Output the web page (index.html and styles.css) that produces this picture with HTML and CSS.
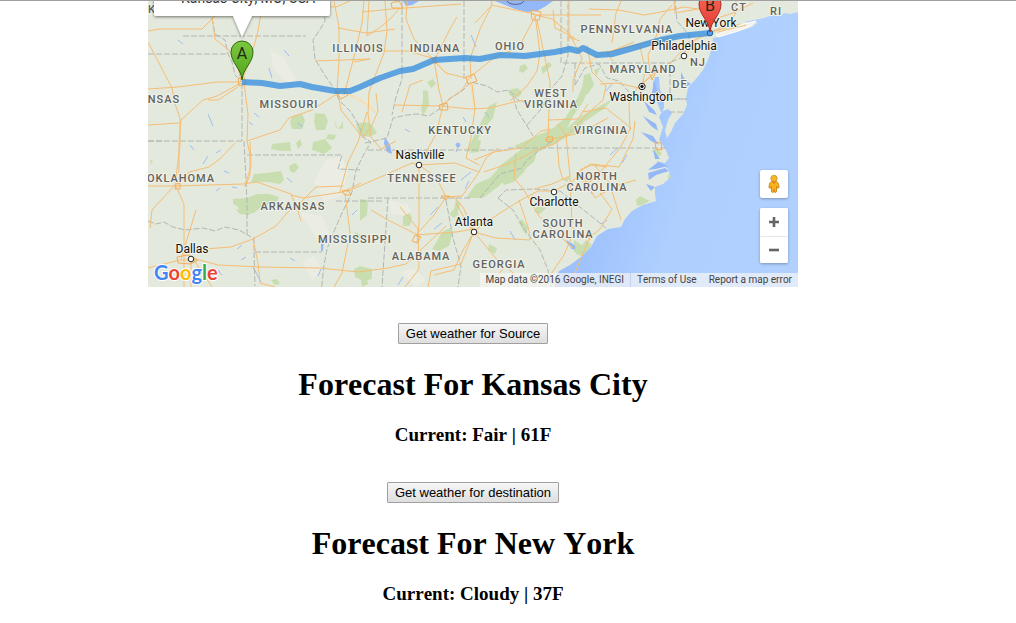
FILE: index.html
```html
<!DOCTYPE html>
<html lang="en">
<head>
<meta charset="utf-8">
<meta name="viewport" content="width=device-width, initial-scale=1">
<title>Trip weather</title>
<link rel="stylesheet" href="styles.css">
</head>
<body>
<main class="page">
  <section class="map" aria-label="Route map">
    <svg class="map-canvas" viewBox="148 1 650 286" role="img" aria-label="Route from Kansas City to New York">
      <defs>
        <linearGradient id="sea" x1="0" y1="0" x2="1" y2="0.35">
          <stop offset="0" stop-color="#8fb3fa"/><stop offset="0.45" stop-color="#a2c5fd"/><stop offset="0.7" stop-color="#afd0ff"/><stop offset="1" stop-color="#b0d1ff"/>
        </linearGradient>
        <linearGradient id="pin-green" x1="0" y1="0" x2="0" y2="1"><stop offset="0" stop-color="#7cc83f"/><stop offset="1" stop-color="#4fa51c"/></linearGradient>
        <linearGradient id="pin-red" x1="0" y1="0" x2="0" y2="1"><stop offset="0" stop-color="#ff6459"/><stop offset="1" stop-color="#dc3b30"/></linearGradient>
        <filter id="shade" x="-20%" y="-20%" width="140%" height="160%"><feDropShadow dx="0" dy="1" stdDeviation="1.5" flood-opacity="0.5"/></filter>
      </defs>
      <rect class="land" x="148" y="1" width="650" height="286"/>

      <g class="plain">
        <path d="M270 50l14 8 12 22-8 4-14-14zM326 160l16-4 6 18-8 22-16 6-10-20zM300 212l22 4 8 18-14 4zM388 200l20 4 4 12-20-2zM400 272l14-4 12 12-10 7zM302 262l12-6 8 14-10 10z"/>
      </g>
      <g class="forest">
        <path d="M292 116l10-2 3 6-3 9-10 0-2-7zM315 113l10 1 3 7-3 9-9 0-2-8zM334 118l2 10 7 1v-8l-3 6-3 1zM356 124l10-2 6 3 5 8-8 4-10-2zM313 142l12-3 7 9-8 6-12-4zM328 134l8 1-2 5-8-1zM296 143l4-4 2 6-4 4zM272 144l18-2 1 9-10 0-10-2zM289 166l6-3 4 4-5 6-4-2z"/>
        <path d="M254 174l12-1 15-2 3 9-4 4-12-2-17 0zM233 199l14-1 10-4 12 0 10 3-3 7-14 2-8 7-12 1-5-8-4-2zM235 209l12 2 8-1-6 5-9-1zM360 199l8 1-1 15-7 6zM355 232l6 3-2 8-4 0zM354 269l6-3 12 3v10l-8 2-9-4zM271 280l6-1 3 5-5 1zM361 279l6-2 1 7-6 3z"/>
        <path d="M403 216l7-3 2 5-2 8-7 0zM442 232l8-4 3 4-4 14-10 5-7-2 6-10zM449 214l4-4 6 4-5 4zM427 82l6-3 3 5-5 4zM423 90l5 1 1 14-6 11-2-7 2-8zM489 106l8-4-4 16-12 14-8 18-7 2 10-20zM512 89l6-1 4 5-3 4-9-1-2-5zM520 66l5-2 3 4-5 5-4-2zM541 68l8-6 3 3-9 9z"/>
        <path d="M466 198l10-14 14-6 12-14 16-12 18-15 12-2-10 14-4 13-13 10-12 4-10 10-16 12zM500 178l10-4 10-14 12-2-8 14-10 10-10 3zM470 153l6-13 5 0-2 12zM489 244l8 4-2 6-7-4zM518 222l4-3 6 9-2 7zM537 206l9 2-6 6-6-2zM574 240l12 8-4 8-8-4z"/>
        <path d="M514 146l20-9 18-8 14-12 11-18 7-16 6 2-7 17-10 14-6 12 14-12 19-10 14-8-12 12-18 12-10 11-18 10-16 8-12 2zM584 75l6-2 4 12-7 10-5-6zM594 70l7-3-5 9zM636 200l4-4 10 5-8 4-5 1zM652 151l5-3 5 6-4 3zM668 175l3-3 1 6-4 3z"/>
        <path d="M586 240l6 5-8 12-8-3zM456 199l5 5-5 12-3-2zM563 180l8-4-4 6zM150 160l3 1-2 3z"/>
      </g>

      <g fill="url(#sea)">
        <path d="M798 12L790 14 785 13 779 16 773 15 764 18 754 20 744 22 752 23 758 22 752 27 740 31 728 34 718 37 713 38 712 48 708 60 703 70 695 80 688 88 686 98 687 105 683 114 675 123 671 132 667 138 665 131 668 120 672 113 668 109 661 112 657 102 653 85 655 77 659 77 660 90 664 97 664 108 659 117 663 127 659 140 666 150 669 158 665 163 656 161 668 169 671 177 663 184 655 187 655 194 656 201 643 205 632 211 625 219 621 227 608 229 597 236 591 247 582 256 570 265 559 271 555 279 555 287H798z"/>
      </g>
      <g class="water">
        <path d="M495 1L505 5 515 9 527 12 537 11 546 6 553 1zM403 1h16l-7 4-6 1zM681 72l4 8 6 4-5 3-5-8zM385 137l5 8 2 9-5-2-3-9zM654 79l3 12-2 12-3-10zM644 101l10 9 3 5-8-3zM643 116l13 8 2 7-7-5zM641 132l12 4 6 9-8-4zM648 173l17-5 4 3-13 4-7 5zM655 187l-9-3 5 7zM648 170l10-8 10 4-12 3zM653 149l7 10-5 0zM321 240l3-3-1 14-2 0zM566 240l7 4 3 6-8-5z"/>
      </g>
      <path class="lake-ring" d="M507 1a9 5 0 0 0 17 0"/>
      <g class="streams">
        <path d="M208 156l-5 8M216 153l5-3M224 171l5 2M216 191l4-3M232 187l5 1M287 178l5 4M237 249l5-4M241 260l5-3M290 258l5 3M269 68l3 10M254 113l5 4M249 122l4 3M208 114l5 12M190 145l4 5M178 40l5 4M298 123l5 4M284 50l5 6M471 35l5 12M461 180l10-8M430 215l8-8M434 229l8-6M443 133l6 2M459 145l-3 7M485 112l4 5M463 117l3 5M465 189l4-8M405 129l5 3M423 150l4 3M478 133l5-5M571 106l7-6M612 84l-6 7M607 220l-6 4M588 186l4 8M627 155l-5 8M610 155l9-8M510 231l5 9M398 285l5-8M321 269l-3 7M253 267l8 15M222 275l-4-5M352 215l5-5"/>
        <circle cx="458" cy="145" r="2"/><circle cx="573" cy="247" r="2"/>
      </g>

      <path class="island" d="M716 35L730 29 744 24 756 21 750 26 735 32 718 37z"/>

      <g class="borders">
        <path d="M148 54H228M183 36H306M148 141H242M242 83V141M212 18l3 16 10 6 3 14 4 8 3 13 7 7M244 141l3 60 0 35M247 155h95l-4 14 22 1M148 221l8 3 8-2 9 5 12 3 10-1 8-1 12 3 10-4 14 3 12 7M148 141h17"/>
        <path d="M323 1l2 20-6 10-6 9 2 19 9 15 11 16 4 10 12 12 8 14 5 12 7 4-7 12-8 16-4 22-4 9-6 12-7 16-8 20-3 16-3 28M254 237v15H322M254 252l1 34M336 201l47 0M368 150H508M365 143l22-5 6-20 14-3 10-1 12 2 12-8 9-10 11-6 10-10 16 4 10 6 12-2 9 10 10 3"/>
        <path d="M402 1l0 78-6 18-4 18M464 1v80M368 198H470M388 198l-6 89M446 200l7 38 8 28-3 21M480 198l20-24 22-6 5-8 14-11 11-8M498 198l15 12 12 20 15 20 8 20 3 17M498 198l8-8 28-1 26 2 46 37M508 148H668M513 96l4 14 10 16 6 10M527 125l15-17 8-18 12-14 6-20V0M561 1v62h110M575 63v24M575 85l10-17 14-4 8 14 12 3 10 11M670 63V99h17M671 62l10-4 8-13 0-10-12-14-2-20M669 99l18 0M669 112l15 0"/>
      </g>

      <g class="road-halo">
        <path d="M342 91l20 10 14 11M433 59l15 16M470 80l4 26M583 65l24-14M682 60l17-23"/>
      </g>
      <g class="roads">
        <path d="M148 31l12-2 42 0 12-12 11-16M212 17l3 22 14 11 9 18 3 13M263 1l-5 30-8 30-8 19M148 89l30-2 40-5 23 0M241 83l-24 13-14 4-22 20-2 23v44M148 42l24 46 3 16 5 14V145l-5 41M179 123l-31 2M244 83l4 31-1 27 3 14 0 20-5 12M247 141l33-11 9-12 23-8 28-18M208 100l10 0 20-13"/>
        <path d="M148 186h28l67-2 14-2 34 12 7 17 3 10M176 186l8 18v86M174 186l-22 24-2 18M178 184l11-12 20-5 12-9 14-15M250 142l1 24-6 20M291 195l12 3 40-6 18-9M148 268l32-8 20 0 18 5 42 2 60 1 38 4 30-4 18-4 40-38M191 250l40-3 22-8 23-13 11-13 15-12 14-14 27-1M253 239l5 24 2 20 15 4M194 260l18 27M191 260v27M196 210l-15 49M345 193l5 40-8 40-8 14M346 192l39-17 27-12 7 2 36-2 24 9M340 192l8-30 10-20 9-30"/>
        <path d="M334 1l5 26V61l-2 30M350 1l-14 6-25-1M338 28l28 5 29-4M315 61l55-2-16 3M338 92l3 18 22 28 9-13 6-14-2-18M344 95l11-42 7-30 2-22M369 1l-2 35 15-10 9-8 9-10M385 1l2 30-3 22-7 18-8 21-1 22 3 23 10 12 15-8M362 12l30-3 69-5M384 51h24l27 8M407 1l-1 18 8 20 20 21M435 59l15-30 7-12M434 60l5 30 4 16-7 28-11 20M436 63l10 10 20 5M394 105l48 1 28 3 20-1 20-5 14-3M402 112l8-27 13-5M442 105l21-16 6-11 26-21 17-7M471 79l-1-20 10-30 11-22 1-6M491 5l44 9 5 40-3 17-10 15-17 15M472 84l3 24-4 30-5 20 13 7M492 5l-17 18"/>
        <path d="M536 15l-15 28-13 10M532 14l20 5 17 14 13 25-9 22 0 12M536 15h65M569 1v40M568 37l12 4M537 20l13 62-2 58 32-7 28-15M553 10l2 18 20 10M589 9l30 1 25 5 12-2 28-6 14 2M587 45l5 27 14 14-3 14-16 14-13 15-20 15-20 7-21 11-29 10M548 120l30-1 10-15M612 43l4-30 5-12M613 61l-6-8 27-11M607 52l33-8 40-8M640 46l5 23-2 14 10-9 18-12 20-20 18-9M653 75l-16 13-8 15 1 28M617 83l22 5M600 84l17-1M650 71l-2-16 8-18 4-18 12-14M674 1l1 12 23-4 18-2M711 32l0-12 22-7 20-10M711 32l12-5 12-12 1-14M711 32l15-4 14-4M718 32l28-7M582 112l24-4 25 20-11 20-18 22-12 12-8 0"/>
        <path d="M400 207l18 22 1 40-14 18M419 165v60l-2 18M371 210l17 10 30 15M428 287l3-16 30-7 14-35M446 197l-12 18-18 20 40-3 18-3M446 197l-10-20-17-12M446 197l8 0 9 10 11 25M446 197l16-1 16-22 8-16 12-10M474 233l-8-12-10-18M474 231l26-18 21-13 17-9 16 0 19-10 10-12 8-4 16 2M474 232l30 36-18 19M474 232l22 6 34 2-1-10-10-30M500 260l14 14 4 13M474 232l-12 20-8 18-20 5M474 160l20-8 27-4 20-17 10-2M516 153l-2 25 10 12 8 14 7 12 14 14 20 18M534 189l18-5 18-8-4-40-8-12M570 178l2 45M591 164l28 3 14-28 2-18M591 164l-11 6 15 28 20-12 21-6M595 166l14 16 12 38M600 193l12 16-12 20-10 8-16 38M571 227l20 13M557 287l-8-10 15-22 9-21M557 140l2 26 4 14"/>
      </g>
      <path class="urban" d="M238 79l6-2 2 7-7 2zM336 92l8-2 4 5-7 4zM391 3l8-2 4 7-11 0zM436 56l-4 4 4 4zM466 77l8-3 3 7-9 3zM439 105l8-2 1 7-8 0zM531 10l10 2-2 8-7 0zM547 137h6l-1 5-6-1zM176 184l4-1 0 6-5 0zM177 257l11-2 10 5-7 4-13-1zM342 191l6-1 3 5-6 0zM649 72l7 0-4 8zM655 142l6 1 1 7-6-1zM415 235l6 2-4 6-5-2zM441 196l8 0-3 4z"/>

      <path class="route" d="M242 82L262 83 280 86 300 84 312 87 335 91 350 91 360 87 380 78 400 71 413 69 434 60 465 58 480 59 500 55 525 56 555 52 570 49 578 51 583 48 597 55 612 54 640 46 660 40 680 36 710 33"/>

      <g class="state" text-anchor="middle">
        <text x="164" y="103">NSAS</text><text x="152" y="13">K</text>
        <text x="358" y="52">ILLINOIS</text><text x="435" y="52">INDIANA</text><text x="510" y="50">OHIO</text>
        <text x="627" y="33">PENNSYLVANIA</text><text x="739" y="11">CT</text><text x="776" y="15">RI</text>
        <text x="698" y="66">NJ</text><text x="643" y="73">MARYLAND</text><text x="680" y="88">DE</text>
        <text x="289" y="108">MISSOURI</text><text x="551" y="97">WEST</text><text x="551" y="108">VIRGINIA</text>
        <text x="460" y="134">KENTUCKY</text><text x="601" y="134">VIRGINIA</text>
        <text x="181" y="182">OKLAHOMA</text><text x="422" y="182">TENNESSEE</text>
        <text x="597" y="180">NORTH</text><text x="597" y="191">CAROLINA</text>
        <text x="293" y="210">ARKANSAS</text><text x="355" y="243">MISSISSIPPI</text>
        <text x="421" y="260">ALABAMA</text><text x="499" y="268">GEORGIA</text>
        <text x="563" y="227">SOUTH</text><text x="563" y="238">CAROLINA</text>
      </g>
      <g class="city" text-anchor="middle">
        <text x="711" y="27">New York</text><text x="684" y="50">Philadelphia</text>
        <text x="641" y="101">Washington</text><text x="420" y="159">Nashville</text>
        <text x="554" y="206">Charlotte</text><text x="474" y="226">Atlanta</text><text x="192" y="253">Dallas</text>
      </g>
      <g class="dot">
        <circle cx="684" cy="56" r="2.8"/><circle cx="419" cy="165" r="2.8"/><circle cx="554" cy="192" r="2.8"/>
        <circle cx="474" cy="232" r="2.8"/><circle cx="191" cy="259" r="2.8"/><circle cx="642" cy="86.500" r="3.2"/>
        <circle class="dot-core" cx="642" cy="86.500" r="1.3"/><circle class="dot-route" cx="710" cy="33" r="2.8"/>
      </g>

      <g class="pin">
        <path fill="url(#pin-green)" stroke="#32690f" d="M242 80C241 68 231 63 231 52a11 11 0 0 1 22 0C253 63 243 68 242 80z"/>
        <text x="242" y="59" text-anchor="middle">A</text>
        <path fill="url(#pin-red)" stroke="#a82b24" d="M710 32C709 20 699 15 699 4a11 11 0 0 1 22 0C721 15 711 20 710 32z"/>
        <text x="710" y="11" text-anchor="middle">B</text>
      </g>
      <g class="info">
        <path filter="url(#shade)" d="M154 -6H330V14q0 2-2 2H252L242 37 233 16H156q-2 0-2-2z"/>
        <text x="181" y="3">Kansas City, MO, USA</text>
      </g>
      <text class="logo" x="154" y="280"><tspan fill="#4285f4">G</tspan><tspan fill="#ea4335">o</tspan><tspan fill="#fbbc05">o</tspan><tspan fill="#4285f4">g</tspan><tspan fill="#34a853">l</tspan><tspan fill="#ea4335">e</tspan></text>
    </svg>

    <div class="controls">
      <button class="control pegman" type="button" aria-label="Street View">
        <svg width="12" height="20" viewBox="0 0 14 22" aria-hidden="true">
          <path d="M4 8L2 10 1 15 3 16 4 14 4 20 6 21 7 17 8 21 10 20 10 14 11 16 13 15 12 10 10 8z" fill="#f9b21d" stroke="#c48212"/>
          <circle cx="7" cy="4.500" r="3.700" fill="#f6b62b" stroke="#c99b35"/>
          <path d="M4.500 8h5L7 11z" fill="#e8761c"/>
        </svg>
      </button>
      <div class="zoom">
        <button class="control" type="button" aria-label="Zoom in"><svg width="12" height="12" viewBox="0 0 12 12" aria-hidden="true"><path d="M1 6h10M6 1v10" stroke="#666" stroke-width="2.600"/></svg></button>
        <button class="control" type="button" aria-label="Zoom out"><svg width="12" height="12" viewBox="0 0 12 12" aria-hidden="true"><path d="M1 6h10" stroke="#666" stroke-width="2.600"/></svg></button>
      </div>
    </div>
    <div class="credits">
      <span>Map data ©2016 Google, INEGI</span>
      <a class="terms" href="#terms">Terms of Use</a>
      <a href="#report">Report a map error</a>
    </div>
  </section>

  <section class="forecast">
    <button class="fetch" type="button">Get weather for Source</button>
    <h1>Forecast For Kansas City</h1>
    <h3>Current: Fair | 61F</h3>
  </section>
  <section class="forecast">
    <button class="fetch" type="button">Get weather for destination</button>
    <h1>Forecast For New York</h1>
    <h3>Current: Cloudy | 37F</h3>
  </section>
</main>
</body>
</html>
```
FILE: styles.css
```css
* { box-sizing: border-box; }

body {
  margin: 0;
  border-top: 1px solid #a0a0a0;
  background: #fff;
  color: #000;
  font-family: "Liberation Serif", "Times New Roman", serif;
  font-kerning: none;
}

.page {
  display: flex;
  flex-direction: column;
  align-items: center;
  padding-right: 70px;
}

.map {
  position: relative;
  width: 100%;
  max-width: 650px;
  overflow: hidden;
  font-family: Roboto, "Liberation Sans", sans-serif;
}

.map-canvas { display: block; width: 100%; height: auto; }

.land { fill: #e4e9dd; }
.plain { fill: #ebece2; }
.forest { fill: #c9deb0; }
.water { fill: #94b7f8; }
.lake-ring { fill: none; stroke: #55617c; stroke-width: 1; }
.streams { fill: #94b7f8; stroke: #9fbdf3; stroke-width: 1; }
.island { fill: #f3f2e8; stroke: #fff; }
.borders { fill: none; stroke: #b2b6b4; stroke-width: 1; stroke-dasharray: 6 2; }
.road-halo { fill: none; stroke: #f6dfb4; stroke-width: 2; }
.roads { fill: none; stroke: #f5bd74; stroke-width: 1; stroke-linejoin: round; }
.urban { fill: none; stroke: #f3ae59; stroke-width: 1; }
.route { fill: none; stroke: #2f8be0; stroke-opacity: 0.75; stroke-width: 6; stroke-linejoin: round; }

.state, .city {
  stroke: #f1f3ea;
  stroke-width: 2px;
  stroke-linejoin: round;
  paint-order: stroke;
}
.state { fill: #62625e; font-size: 11px; font-weight: 500; letter-spacing: 1px; }
.city { fill: #111; font-size: 12px; }

.dot { fill: #fff; stroke: #222; stroke-width: 1; }
.dot-core { fill: #111; }
.dot-route { fill: #5a9be8; stroke: #1d5da8; }

.pin { fill: #1c2c10; font-size: 16px; }
.info { fill: #fff; font-size: 14px; }
.info text { fill: #333; }

.logo {
  font-family: Lato, Roboto, sans-serif;
  font-size: 20px;
  font-weight: 700;
  stroke: #fff;
  stroke-width: 2px;
  paint-order: stroke;
}

.controls {
  position: absolute;
  right: 10px;
  bottom: 24px;
  display: flex;
  flex-direction: column;
  gap: 10px;
}

.control {
  display: flex;
  align-items: center;
  justify-content: center;
  width: 28px;
  height: 28px;
  padding: 0;
  border: 0;
  border-radius: 2px;
  background: #fff;
}
.pegman, .zoom { box-shadow: 0 1px 3px rgba(0, 0, 0, 0.3); }
.zoom { border-radius: 2px; background: #fff; }
.zoom .control + .control { height: 27px; border-top: 1px solid #e6e6e6; }

.credits {
  position: absolute;
  right: 0;
  bottom: 0;
  display: flex;
  height: 14px;
  background: rgba(245, 245, 245, 0.7);
  color: #444;
  font-size: 10px;
  line-height: 14px;
  white-space: nowrap;
}
.credits > * { padding: 0 6px; }
.credits a { color: inherit; text-decoration: none; }
.terms { border-left: 1px solid #c3d3ec; }

.forecast {
  display: flex;
  flex-direction: column;
  align-items: center;
  padding-top: 36px;
  text-align: center;
}

.fetch {
  height: 21px;
  padding: 0 7px;
  border: 1px solid #a0a0a0;
  border-radius: 1px;
  background: linear-gradient(#f6f6f6, #dedede);
  color: #000;
  font-family: "Liberation Sans", Arial, sans-serif;
  font-size: 13px;
}

.forecast h1 { margin: 22px 0 21px; font-size: 32px; line-height: 37px; }
.forecast h3 { margin: 0; font-size: 19px; line-height: 22px; }
```
